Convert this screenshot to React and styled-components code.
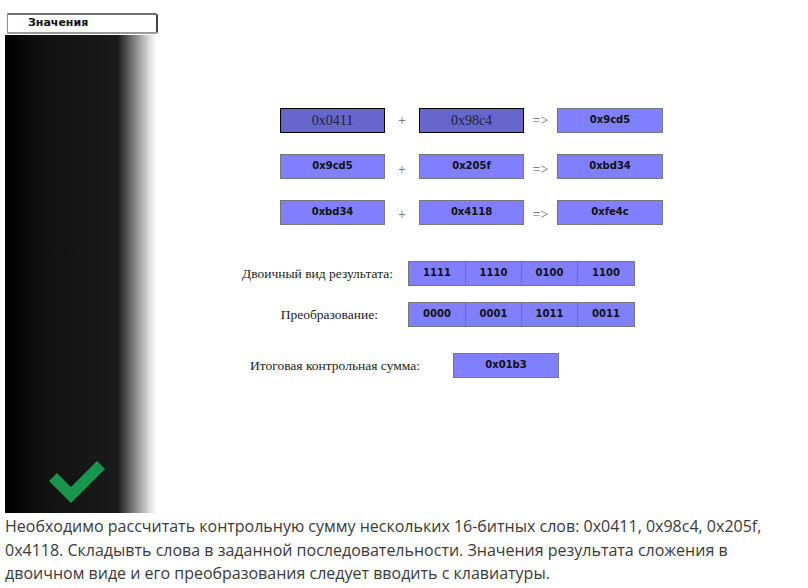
import styled, { createGlobalStyle } from 'styled-components'

const GlobalStyle = createGlobalStyle`
  body {
    margin: 0;
    background: #fff;
  }
`

const Page = styled.div`
  width: 808px;
  padding: 0 5px;
  box-sizing: border-box;
`

const Applet = styled.div`
  display: flex;
  height: 513px;
`

const Sidebar = styled.div`
  width: 152px;
  display: flex;
  flex-direction: column;
`

const HeaderArea = styled.div`
  height: 35px;
  padding-top: 13px;
  box-sizing: border-box;
`

const HeaderBar = styled.div`
  width: 151px;
  height: 21px;
  margin-left: 2px;
  box-sizing: border-box;
  background: #fff;
  border: 1px solid #8a8a8a;
  border-top: 2px solid #6e6e6e;
  border-bottom: 2px solid #9a9a9a;
  border-right: 2px solid #444;
  border-radius: 0 3px 3px 0;
  font: bold 11px 'DejaVu Sans', Verdana, sans-serif;
  color: #111;
  padding-left: 20px;
  line-height: 16px;
`

const Panel = styled.div`
  flex: 1;
  display: flex;
  align-items: flex-end;
  padding: 0 0 8px 42px;
  background: linear-gradient(
    to right,
    #000 0%,
    #111 25%,
    #1a1a1a 74%,
    #777 84%,
    #ddd 95%,
    #fff 100%
  );
`

const Stage = styled.div`
  flex: 1;
  padding-top: 108px;
  display: flex;
  flex-direction: column;
`

const SumGrid = styled.div`
  display: grid;
  grid-template-columns: 105px 34px 105px 33px 106px;
  grid-auto-rows: 25px;
  row-gap: 21px;
  margin-left: 123px;
`

const Box = styled.div`
  box-sizing: border-box;
  height: 25px;
  width: ${(p) => (p.$w ? `${p.$w}px` : 'auto')};
  display: flex;
  align-items: center;
  justify-content: center;
  background: ${(p) => (p.$dark ? '#6666cc' : '#8080ff')};
  border: 1px solid ${(p) => (p.$dark ? '#000' : '#777')};
  color: ${(p) => (p.$dark ? '#242438' : '#111')};
  font: ${(p) =>
    p.$dark
      ? "14px 'Liberation Serif', 'Times New Roman', serif"
      : "bold 10px 'DejaVu Sans', Verdana, sans-serif"};
  padding-bottom: ${(p) => (p.$dark ? 0 : 2)}px;
`

const Operator = styled.div`
  display: flex;
  align-items: center;
  justify-content: center;
  font: 14px 'Liberation Serif', 'Times New Roman', serif;
  color: #666;
  padding-top: ${(p) => p.$drop || 0}px;
`

const BitRow = styled.div`
  display: flex;
  align-items: center;
  margin-top: ${(p) => p.$top}px;
`

const Label = styled.div`
  width: ${(p) => p.$width}px;
  padding-right: ${(p) => p.$gap}px;
  box-sizing: border-box;
  text-align: right;
  font: 13.5px 'Liberation Serif', 'Times New Roman', serif;
  color: #222;
  white-space: nowrap;
`

const Cells = styled.div`
  display: flex;
  height: 25px;
  border: 1px solid #777;
  box-sizing: border-box;
  background: #8080ff;
`

const Cell = styled.div`
  width: ${(p) => p.$w}px;
  display: flex;
  align-items: center;
  justify-content: center;
  border-left: ${(p) => (p.$first ? 'none' : '1px solid #777')};
  font: bold 10px 'DejaVu Sans', Verdana, sans-serif;
  color: #111;
  padding-bottom: 2px;
`

const Description = styled.p`
  margin: 0;
  padding-top: 2px;
  font: 16px 'Open Sans', 'Noto Sans', sans-serif;
  line-height: 23.5px;
  color: #3a3a3a;
`

const sums = [
  { a: '0x0411', b: '0x98c4', r: '0x9cd5', dark: true, drop: 0 },
  { a: '0x9cd5', b: '0x205f', r: '0xbd34', drop: 7 },
  { a: '0xbd34', b: '0x4118', r: '0xfe4c', drop: 4 },
]

const widths = [56, 55, 55, 56]

function Check() {
  return (
    <svg width="58" height="48" viewBox="0 0 58 48">
      <path d="M2 24 L10 16 L24 30 L50 4 L58 12 L24 46 Z" fill="#17954a" />
    </svg>
  )
}

function BitCells({ bits }) {
  return (
    <Cells>
      {bits.map((b, i) => (
        <Cell key={i} $w={widths[i]} $first={i === 0}>
          {b}
        </Cell>
      ))}
    </Cells>
  )
}

export default function App() {
  return (
    <Page>
      <GlobalStyle />
      <Applet>
        <Sidebar>
          <HeaderArea>
            <HeaderBar>Значения</HeaderBar>
          </HeaderArea>
          <Panel>
            <Check />
          </Panel>
        </Sidebar>
        <Stage>
          <SumGrid>
            {sums.map((s, i) => [
              <Box key={`a${i}`} $dark={s.dark}>{s.a}</Box>,
              <Operator key={`p${i}`} $drop={s.drop}>+</Operator>,
              <Box key={`b${i}`} $dark={s.dark}>{s.b}</Box>,
              <Operator key={`e${i}`} $drop={s.drop}>=&gt;</Operator>,
              <Box key={`r${i}`}>{s.r}</Box>,
            ])}
          </SumGrid>
          <BitRow $top={36}>
            <Label $width={251} $gap={15}>Двоичный вид результата:</Label>
            <BitCells bits={['1111', '1110', '0100', '1100']} />
          </BitRow>
          <BitRow $top={16}>
            <Label $width={251} $gap={30}>Преобразование:</Label>
            <BitCells bits={['0000', '0001', '1011', '0011']} />
          </BitRow>
          <BitRow $top={26}>
            <Label $width={296} $gap={33}>Итоговая контрольная сумма:</Label>
            <Box $w={106}>0x01b3</Box>
          </BitRow>
        </Stage>
      </Applet>
      <Description>
        Необходимо рассчитать контрольную сумму нескольких 16-битных слов: 0x0411, 0x98c4, 0x205f,
        0x4118. Складывть слова в заданной последовательности. Значения результата сложения в
        двоичном виде и его преобразования следует вводить с клавиатуры.
      </Description>
    </Page>
  )
}
